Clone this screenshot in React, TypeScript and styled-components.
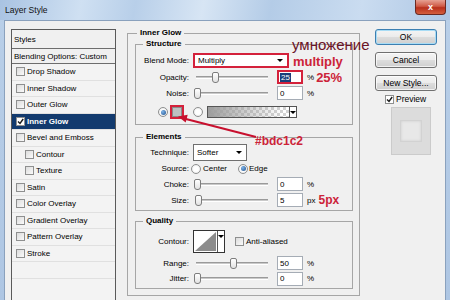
import styled, { createGlobalStyle } from "styled-components";

const GlobalStyle = createGlobalStyle`
  * { box-sizing: border-box; }
  html, body { margin: 0; padding: 0; }
  body {
    width: 450px;
    height: 300px;
    overflow: hidden;
    font-family: "Liberation Sans", Arial, sans-serif;
    font-size: 8px;
    color: #000;
  }
`;

const Window = styled.div`
  position: relative;
  width: 450px;
  height: 300px;
  display: flex;
  flex-direction: column;
  overflow: hidden;
  background: linear-gradient(to bottom, #b9cfe8, #aec6e3);
`;

const TitleBar = styled.div`
  height: 20px;
  flex: none;
  display: flex;
  align-items: flex-start;
  justify-content: space-between;
  background: linear-gradient(100deg, #a9c3e2 0%, #cfe0f2 18%, #b8cfe9 30%, #d7e5f4 45%, #b4cce7 60%, #cadcf0 80%, #aec7e4 100%);
`;

const Title = styled.span`
  margin: 5px 0 0 5px;
  font-size: 8.5px;
  line-height: 10px;
  color: #111;
`;

const CloseButton = styled.div`
  width: 31px;
  height: 15px;
  margin-right: 4px;
  border: 1px solid #6b2a22;
  border-top: none;
  border-radius: 0 0 4px 4px;
  background: linear-gradient(#e6a193, #cf5a45 45%, #b8301c 55%, #d4603f);
  color: #fff;
  font-weight: bold;
  font-size: 9px;
  display: flex;
  align-items: center;
  justify-content: center;
`;

const Body = styled.div`
  flex: 1;
  min-height: 0;
  margin: 0 4px;
  display: flex;
  align-items: flex-start;
  padding: 7px 0 0 6px;
  background: #f0f0f0;
  border: 1px solid #8aa1bd;
  border-bottom: none;
`;

/* ---- left styles list ---- */

const StylesList = styled.div`
  width: 105px;
  height: 290px;
  margin-top: 1px;
  flex: none;
  border: 1px solid #5a5a5a;
  background: #f3f3f3;
`;

const ListHead = styled.div<{ $h: number }>`
  height: ${(p) => p.$h}px;
  display: flex;
  align-items: center;
  padding-left: 2px;
  border-bottom: 1px solid #6d6d6d;
  background: #f0f0f0;
`;

const ListItem = styled.div<{ $indent?: boolean; $active?: boolean }>`
  height: 16.5px;
  display: flex;
  align-items: center;
  padding-left: ${(p) => (p.$indent ? 13 : 4)}px;
  border-bottom: 1px solid #e0e0e0;
  background: ${(p) => (p.$active ? "#123a6e" : "transparent")};
  color: ${(p) => (p.$active ? "#fff" : "#000")};
  font-weight: ${(p) => (p.$active ? "bold" : "normal")};
`;

const Box = styled.span<{ $checked?: boolean; $ml?: number }>`
  width: 9px;
  height: 9px;
  flex: none;
  margin-left: ${(p) => p.$ml ?? 0}px;
  margin-right: 2px;
  border: 1px solid #8e8f8f;
  background: ${(p) => (p.$checked ? "#fff" : "linear-gradient(135deg, #dcdcdc, #fafafa)")};
  display: flex;
  align-items: center;
  justify-content: center;
`;

const Check = () => (
  <svg width="7" height="7" viewBox="0 0 7 7">
    <path d="M1 3.5 L3 5.5 L6.2 1" fill="none" stroke="#1c1c1c" strokeWidth="1.4" />
  </svg>
);

/* ---- group boxes ---- */

const OuterGroup = styled.div`
  width: 233px;
  flex: none;
  margin: 5px 0 0 11px;
  padding: 0 6px 6px 7px;
  border: 1px solid #a6a6a6;
`;

const Group = styled.div<{ $mt: number; $pb: number }>`
  margin-top: ${(p) => p.$mt}px;
  padding-bottom: ${(p) => p.$pb}px;
  border: 1px solid #a6a6a6;
`;

const Legend = styled.div<{ $ml: number }>`
  display: table;
  height: 10px;
  line-height: 10px;
  margin: -6px 0 0 ${(p) => p.$ml}px;
  padding: 0 3px;
  background: #f0f0f0;
  font-weight: bold;
`;

const Row = styled.div<{ $h: number; $mt?: number }>`
  height: ${(p) => p.$h}px;
  margin-top: ${(p) => p.$mt ?? 0}px;
  display: flex;
  align-items: center;
`;

const Label = styled.span`
  width: 53px;
  flex: none;
  text-align: right;
`;

const Text = styled.span<{ $ml?: number }>`
  margin-left: ${(p) => p.$ml ?? 0}px;
  white-space: nowrap;
`;

const Caret = styled.span`
  width: 0;
  height: 0;
  border-left: 3px solid transparent;
  border-right: 3px solid transparent;
  border-top: 3px solid #000;
`;

const Dropdown = styled.div<{ $w: number; $h: number; $mark?: boolean }>`
  width: ${(p) => p.$w}px;
  height: ${(p) => p.$h}px;
  margin-left: 4px;
  flex: none;
  display: flex;
  align-items: center;
  justify-content: space-between;
  padding: 0 4px 0 3px;
  background: #fff;
  border: ${(p) => (p.$mark ? "2px solid #d4213b" : "1px solid #6f6f6f")};
`;

const SliderBox = styled.div`
  position: relative;
  width: 78px;
  height: 11px;
  margin-left: 4px;
  flex: none;
`;

const Track = styled.div`
  position: absolute;
  left: 3px;
  right: 3px;
  top: 4px;
  height: 3px;
  background: #c9c9c9;
  border-top: 1px solid #9a9a9a;
  border-bottom: 1px solid #fff;
`;

const Thumb = styled.div`
  position: absolute;
  top: 0;
  width: 7px;
  height: 11px;
  background: linear-gradient(#fff, #e2e2e2);
  border: 1px solid #7d7d7d;
  border-radius: 2px 2px 3px 3px;
`;

const Slider = ({ value }: { value: number }) => (
  <SliderBox>
    <Track />
    <Thumb style={{ left: 0.5 + value * 0.72 }} />
  </SliderBox>
);

const NumBox = styled.div<{ $mark?: boolean }>`
  width: 26px;
  height: 14px;
  margin-left: 6px;
  flex: none;
  display: flex;
  align-items: center;
  padding-left: ${(p) => (p.$mark ? 1 : 2)}px;
  background: #fff;
  border: ${(p) => (p.$mark ? "2px solid #d4213b" : "1px solid #a5acb5")};
`;

const Selected = styled.span`
  background: #1a3f7a;
  color: #fff;
  padding: 0 1px;
`;

const Unit = styled.span`
  margin-left: 4px;
`;

const RedNote = styled.span<{ $ml: number; $size: number }>`
  margin-left: ${(p) => p.$ml}px;
  font-size: ${(p) => p.$size}px;
  font-weight: bold;
  color: #cc2338;
  white-space: nowrap;
`;

const Radio = styled.span<{ $on?: boolean; $ml: number }>`
  width: 10px;
  height: 10px;
  flex: none;
  margin-left: ${(p) => p.$ml}px;
  border-radius: 50%;
  border: 1px solid #8e8f8f;
  background: radial-gradient(circle, #fff 40%, #e0e0e0);
  display: flex;
  align-items: center;
  justify-content: center;
  &::after {
    content: "";
    display: ${(p) => (p.$on ? "block" : "none")};
    width: 5px;
    height: 5px;
    border-radius: 50%;
    background: radial-gradient(circle at 35% 35%, #7fb4e8, #1d4f8c);
  }
`;

const Swatch = styled.div`
  width: 14px;
  height: 14px;
  margin-left: 2px;
  flex: none;
  border: 2px solid #d4213b;
  background: #bdc1c2;
  box-shadow: inset 0 0 0 1px #8a8a8a;
`;

const GradientBar = styled.div`
  width: 90px;
  height: 12px;
  margin-left: 4px;
  flex: none;
  display: flex;
  justify-content: flex-end;
  border: 1px solid #555;
  background: linear-gradient(to right, #9d9d9d, rgba(200, 200, 200, 0) 85%),
    repeating-conic-gradient(#d2d2d2 0 25%, #fff 0 50%) 0 0 / 6px 6px;
`;

const ArrowCell = styled.div<{ $top?: boolean }>`
  width: 7px;
  flex: none;
  display: flex;
  justify-content: center;
  align-items: ${(p) => (p.$top ? "flex-start" : "center")};
  padding-top: ${(p) => (p.$top ? 4 : 0)}px;
  background: #fff;
  border-left: 1px solid #555;
`;

const ContourPicker = styled.div`
  height: 23px;
  margin-left: 4px;
  flex: none;
  display: flex;
  border: 1px solid #333;
  background: #fff;
`;

/* ---- right column ---- */

const SideColumn = styled.div`
  width: 62px;
  flex: none;
  margin: 1px 0 0 15px;
  display: flex;
  flex-direction: column;
`;

const Button = styled.div<{ $default?: boolean; $mt?: number }>`
  height: 16px;
  margin-top: ${(p) => p.$mt ?? 0}px;
  display: flex;
  align-items: center;
  justify-content: center;
  font-size: 8.5px;
  border: 1px solid ${(p) => (p.$default ? "#3c7fb1" : "#707070")};
  border-radius: 3px;
  background: linear-gradient(#f4f4f4, #ebebeb 50%, #dddddd 50%, #cfcfcf);
  box-shadow: inset 0 0 0 1px ${(p) => (p.$default ? "#a8dcf5" : "rgba(255,255,255,0.7)")};
`;

const PreviewRow = styled.div`
  height: 12px;
  margin-top: 2px;
  padding-left: 10px;
  display: flex;
  align-items: center;
  font-size: 8.5px;
`;

const PreviewBox = styled.div`
  width: 40px;
  height: 48px;
  margin: 2px 0 0 16px;
  display: flex;
  align-items: center;
  justify-content: center;
  background: #dcdcdc;
  border: 1px solid #cbcbcb;
`;

const PreviewSquare = styled.div`
  width: 22px;
  height: 22px;
  background: #e8e8e8;
  border: 1px solid #d2d2d2;
  box-shadow: inset 0 0 3px #cdcdcd;
`;

/* ---- red annotations over the dialog ---- */

const Note = styled.span<{ $x: number; $y: number; $size: number; $color: string; $bold?: boolean }>`
  position: absolute;
  left: ${(p) => p.$x}px;
  top: ${(p) => p.$y}px;
  font-size: ${(p) => p.$size}px;
  line-height: ${(p) => p.$size}px;
  font-weight: ${(p) => (p.$bold ? "bold" : "normal")};
  color: ${(p) => p.$color};
  white-space: nowrap;
`;

const ArrowSvg = styled.svg`
  position: absolute;
  left: 170px;
  top: 110px;
`;

const styleItems: { name: string; indent?: boolean; active?: boolean }[] = [
  { name: "Drop Shadow" },
  { name: "Inner Shadow" },
  { name: "Outer Glow" },
  { name: "Inner Glow", active: true },
  { name: "Bevel and Emboss" },
  { name: "Contour", indent: true },
  { name: "Texture", indent: true },
  { name: "Satin" },
  { name: "Color Overlay" },
  { name: "Gradient Overlay" },
  { name: "Pattern Overlay" },
  { name: "Stroke" },
];

export default function App() {
  return (
    <>
      <GlobalStyle />
      <Window>
        <TitleBar>
          <Title>Layer Style</Title>
          <CloseButton>x</CloseButton>
        </TitleBar>
        <Body>
          <StylesList>
            <ListHead $h={19}>Styles</ListHead>
            <ListHead $h={15}>Blending Options: Custom</ListHead>
            {styleItems.map((it) => (
              <ListItem key={it.name} $indent={it.indent} $active={it.active}>
                <Box $checked={it.active}>{it.active && <Check />}</Box>
                {it.name}
              </ListItem>
            ))}
            <ListItem />
          </StylesList>

          <OuterGroup>
            <Legend $ml={2}>Inner Glow</Legend>

            <Group $mt={6} $pb={3}>
              <Legend $ml={7}>Structure</Legend>
              <Row $h={15} $mt={4}>
                <Label>Blend Mode:</Label>
                <Dropdown $w={96} $h={15} $mark>
                  Multiply
                  <Caret />
                </Dropdown>
              </Row>
              <Row $h={16} $mt={1}>
                <Label>Opacity:</Label>
                <Slider value={25} />
                <NumBox $mark>
                  <Selected>25</Selected>
                </NumBox>
                <Unit>%</Unit>
                <RedNote $ml={2} $size={13}>25%</RedNote>
              </Row>
              <Row $h={16}>
                <Label>Noise:</Label>
                <Slider value={0} />
                <NumBox>0</NumBox>
                <Unit>%</Unit>
              </Row>
              <Row $h={18} $mt={2}>
                <Radio $on $ml={22} />
                <Swatch />
                <Radio $ml={9} />
                <GradientBar>
                  <ArrowCell>
                    <Caret />
                  </ArrowCell>
                </GradientBar>
              </Row>
            </Group>

            <Group $mt={12} $pb={2}>
              <Legend $ml={7}>Elements</Legend>
              <Row $h={17} $mt={2}>
                <Label>Technique:</Label>
                <Dropdown $w={54} $h={17}>
                  Softer
                  <Caret />
                </Dropdown>
              </Row>
              <Row $h={15}>
                <Label>Source:</Label>
                <Radio $ml={2} />
                <Text $ml={2}>Center</Text>
                <Radio $on $ml={11} />
                <Text $ml={1}>Edge</Text>
              </Row>
              <Row $h={16}>
                <Label>Choke:</Label>
                <Slider value={0} />
                <NumBox>0</NumBox>
                <Unit>%</Unit>
              </Row>
              <Row $h={16}>
                <Label>Size:</Label>
                <Slider value={2} />
                <NumBox>5</NumBox>
                <Unit>px</Unit>
                <RedNote $ml={3} $size={12}>5px</RedNote>
              </Row>
            </Group>

            <Group $mt={10} $pb={2}>
              <Legend $ml={7}>Quality</Legend>
              <Row $h={23} $mt={4}>
                <Label>Contour:</Label>
                <ContourPicker>
                  <svg width="23" height="21" viewBox="0 0 23 21">
                    <polygon points="1,20 22,1 22,20" fill="#8c8c8c" />
                  </svg>
                  <ArrowCell $top>
                    <Caret />
                  </ArrowCell>
                </ContourPicker>
                <Box $ml={10} />
                <Text>Anti-aliased</Text>
              </Row>
              <Row $h={16} $mt={2}>
                <Label>Range:</Label>
                <Slider value={50} />
                <NumBox>50</NumBox>
                <Unit>%</Unit>
              </Row>
              <Row $h={15}>
                <Label>Jitter:</Label>
                <Slider value={0} />
                <NumBox>0</NumBox>
                <Unit>%</Unit>
              </Row>
            </Group>
          </OuterGroup>

          <SideColumn>
            <Button $default>OK</Button>
            <Button $mt={7}>Cancel</Button>
            <Button $mt={7}>New Style...</Button>
            <PreviewRow>
              <Box $checked>
                <Check />
              </Box>
              Preview
            </PreviewRow>
            <PreviewBox>
              <PreviewSquare />
            </PreviewBox>
          </SideColumn>
        </Body>

        <Note $x={292} $y={37} $size={15} $color="#6b1426">умножение</Note>
        <Note $x={293} $y={55} $size={13} $color="#cc2338" $bold>multiply</Note>
        <Note $x={255} $y={135} $size={12} $color="#cc2338" $bold>#bdc1c2</Note>
        <ArrowSvg width="92" height="32" viewBox="0 0 92 32">
          <line x1="86" y1="27" x2="14" y2="8.5" stroke="#c8102e" strokeWidth="2" />
          <polygon points="8,6.5 17.7,4.8 15.7,12.6" fill="#c8102e" />
        </ArrowSvg>
      </Window>
    </>
  );
}
